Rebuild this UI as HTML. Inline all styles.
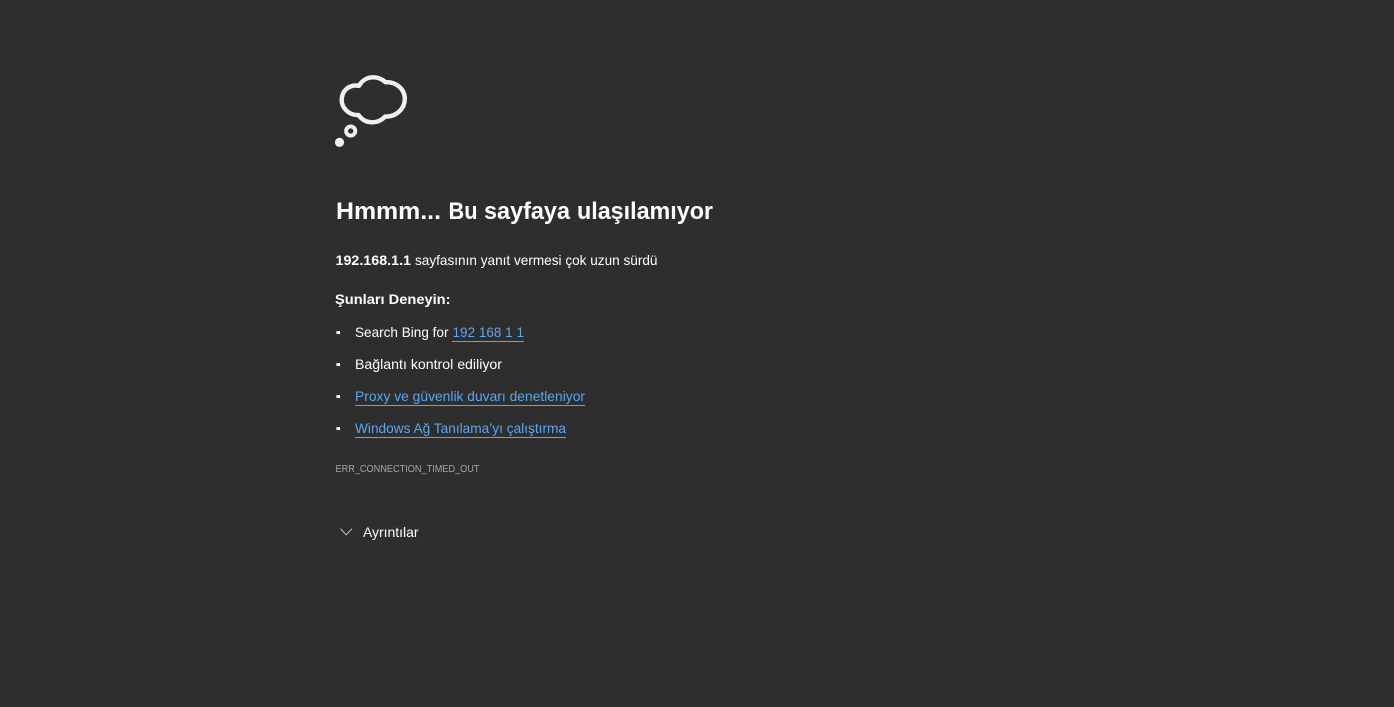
<!DOCTYPE html>
<html lang="tr">
<head>
<meta charset="utf-8">
<title>192.168.1.1</title>
<style>
html,body{margin:0;padding:0;width:1394px;height:707px;overflow:hidden;background:#2e2e2e}
svg{position:absolute;left:0;top:0;display:block}
text{font-family:"Liberation Sans",sans-serif;font-size:14px;fill:#fff}
.b{font-weight:700}
.h{font-size:24px}
.l{fill:#5ba6ef}
</style>
</head>
<body>
<svg width="1394" height="707" viewBox="0 0 1394 707" xmlns="http://www.w3.org/2000/svg">
<path d="M359 85.8C362 80.5 367 77.3 373 77.3C378 77.3 382 79 385.5 82.2C396 81.5 404.8 89 404.8 99C404.8 109 396 117 385 116.6C381.5 120.5 377 122.3 372 122.3C366.5 122.3 362 120 358.5 115C349 115.5 341.7 108 341.7 100C341.7 91 349 84 359 85.8Z" fill="none" stroke="#f0f0f0" stroke-width="4.4" stroke-linejoin="round"/>
<circle cx="350.7" cy="131" r="4.6" fill="none" stroke="#f0f0f0" stroke-width="3.9"/>
<circle cx="339.5" cy="142.4" r="4.6" fill="#f0f0f0"/>

<text class="b h" x="336" y="219" textLength="105" lengthAdjust="spacingAndGlyphs">Hmmm...</text>
<text class="b h" x="448.5" y="219" textLength="29" lengthAdjust="spacingAndGlyphs">Bu</text>
<text class="b h" x="484" y="219" textLength="86" lengthAdjust="spacingAndGlyphs">sayfaya</text>
<text class="b h" x="577" y="219" textLength="136" lengthAdjust="spacingAndGlyphs">ulaşılamıyor</text>

<text class="b" x="335.5" y="265" textLength="75.5" lengthAdjust="spacingAndGlyphs">192.168.1.1</text>
<text x="415" y="265" textLength="242.5" lengthAdjust="spacingAndGlyphs">sayfasının yanıt vermesi çok uzun sürdü</text>

<text class="b" x="335" y="304" textLength="115.5" lengthAdjust="spacingAndGlyphs">Şunları Deneyin:</text>

<rect x="336.5" y="331" width="3.5" height="3" fill="#fff"/>
<text x="355" y="337" textLength="93.5" lengthAdjust="spacingAndGlyphs">Search Bing for</text>
<text class="l" x="452.5" y="337" textLength="71.5" lengthAdjust="spacingAndGlyphs">192 168 1 1</text>
<rect x="452" y="341" width="72" height="1" fill="#5ba6ef"/>

<rect x="336.5" y="363" width="3.5" height="3" fill="#fff"/>
<text x="355" y="369" textLength="147" lengthAdjust="spacingAndGlyphs">Bağlantı kontrol ediliyor</text>

<rect x="336.5" y="395" width="3.5" height="3" fill="#fff"/>
<text class="l" x="355" y="401" textLength="230" lengthAdjust="spacingAndGlyphs">Proxy ve güvenlik duvarı denetleniyor</text>
<rect x="355" y="405" width="230" height="1" fill="#5ba6ef"/>

<rect x="336.5" y="427" width="3.5" height="3" fill="#fff"/>
<text class="l" x="355" y="433" textLength="211" lengthAdjust="spacingAndGlyphs">Windows Ağ Tanılama’yı çalıştırma</text>
<rect x="355" y="437" width="211" height="1" fill="#5ba6ef"/>

<text x="335.5" y="472" style="font-size:10px;fill:#a6a6a6" textLength="144" lengthAdjust="spacingAndGlyphs">ERR_CONNECTION_TIMED_OUT</text>

<path d="M340.5 528.7L346.2 534.8L352 528.7" fill="none" stroke="#c8c8c8" stroke-width="1"/>
<text x="363" y="537" textLength="55.5" lengthAdjust="spacingAndGlyphs">Ayrıntılar</text>
</svg>
</body>
</html>
